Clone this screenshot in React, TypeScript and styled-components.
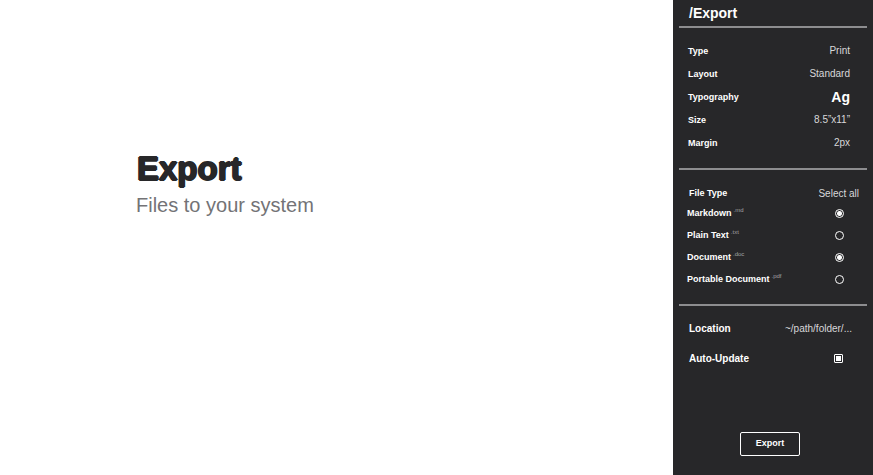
import React from 'react';
import styled, { createGlobalStyle } from 'styled-components';

const GlobalStyle = createGlobalStyle`
  *, *::before, *::after { box-sizing: border-box; }
  body {
    margin: 0;
    background: #fff;
    font-family: "Liberation Sans", Arial, sans-serif;
  }
`;

const Page = styled.div`
  display: grid;
  grid-template-columns: minmax(0, 1fr) 200px;
  min-height: 100vh;
`;

const Hero = styled.main`
  padding: 149px 24px 24px 136px;
`;

/* Shadows on four sides thicken the strokes and round off their corners. */
const Title = styled.h1`
  margin: 0;
  padding-left: 1px;
  font-size: 33px;
  line-height: 40px;
  font-weight: 700;
  color: #272729;
  text-shadow: 1px 0 #272729, -1px 0 #272729, 0 1px #272729, 0 -1px #272729;
`;

const Subtitle = styled.p`
  margin: 4px 0 0;
  font-size: 20px;
  line-height: 24px;
  color: #737376;
`;

const Panel = styled.aside`
  display: flex;
  flex-direction: column;
  padding: 0 6px 19px;
  background: #272729;
  color: #fff;
`;

const PanelTitle = styled.h2`
  margin: 0;
  padding-left: 10px;
  font-size: 14px;
  line-height: 26px;
  font-weight: 700;
`;

const Rule = styled.hr`
  width: 100%;
  height: 2px;
  margin: 0;
  border: 0;
  background: #8d8d8f;
`;

const Settings = styled.dl`
  margin: 0;
  padding: 11px 17px 14px 9px;
`;

const Setting = styled.div`
  display: flex;
  align-items: center;
  justify-content: space-between;
  height: 23px;
`;

const Name = styled.dt`
  font-size: 9px;
  font-weight: 700;
`;

const Value = styled.dd<{ $sample?: boolean }>`
  margin: 0;
  font-size: ${(p) => (p.$sample ? 14 : 10)}px;
  font-weight: ${(p) => (p.$sample ? 700 : 400)};
  color: ${(p) => (p.$sample ? '#fff' : '#d8d8da')};
`;

const FileTypes = styled.section`
  padding: 13px 8px 13px;
`;

const FileHeader = styled.div`
  display: flex;
  align-items: center;
  justify-content: space-between;
  height: 20px;
  padding-left: 2px;
`;

const FileHeading = styled.h3`
  margin: 0;
  font-size: 9px;
  font-weight: 700;
`;

const TextButton = styled.button`
  padding: 0;
  border: 0;
  background: none;
  font: 10px "Liberation Sans", Arial, sans-serif;
  color: #d8d8da;
  cursor: pointer;
`;

const FileOption = styled.label`
  display: flex;
  align-items: center;
  justify-content: space-between;
  height: 22px;
  padding: 0 15px 2px 0;
  font-size: 9px;
  font-weight: 700;
`;

const Extension = styled.sup`
  margin-left: 2px;
  font-size: 6px;
  line-height: 0;
  font-weight: 400;
  vertical-align: 4px;
  color: #a0a0a2;
`;

const Dot = styled.input`
  appearance: none;
  width: 9px;
  height: 9px;
  margin: 0;
  border: 1px solid #fff;
  border-radius: 50%;
  &:checked {
    background: radial-gradient(circle, #fff 2px, transparent 3px);
  }
`;

const Destination = styled.section`
  flex: 1;
  padding: 7px 15px 16px 10px;
`;

const DestinationRow = styled.div`
  display: flex;
  align-items: center;
  justify-content: space-between;
  height: 30px;
`;

const DestinationName = styled.label`
  font-size: 10px;
  font-weight: 700;
`;

const Tick = styled.input`
  appearance: none;
  width: 9px;
  height: 9px;
  margin: 0 9px 0 0;
  padding: 1px;
  border: 1px solid #fff;
  border-radius: 1px;
  &:checked {
    background: #fff content-box;
  }
`;

const ExportButton = styled.button`
  align-self: center;
  width: 60px;
  height: 24px;
  margin-right: 6px;
  padding: 0 0 2px;
  border: 1px solid #fff;
  border-radius: 2px;
  background: none;
  font: 700 9px "Liberation Sans", Arial, sans-serif;
  color: #fff;
  cursor: pointer;
`;

const settings = [
  { name: 'Type', value: 'Print' },
  { name: 'Layout', value: 'Standard' },
  { name: 'Typography', value: 'Ag', sample: true },
  { name: 'Size', value: '8.5”x11”' },
  { name: 'Margin', value: '2px' },
];

const fileTypes = [
  { name: 'Markdown', extension: '.md', on: true },
  { name: 'Plain Text', extension: '.txt', on: false },
  { name: 'Document', extension: '.doc', on: true },
  { name: 'Portable Document', extension: '.pdf', on: false },
];

export default function App() {
  return (
    <>
      <GlobalStyle />
      <Page>
        <Hero>
          <Title>Export</Title>
          <Subtitle>Files to your system</Subtitle>
        </Hero>
        <Panel>
          <PanelTitle>/Export</PanelTitle>
          <Rule />
          <Settings>
            {settings.map((s) => (
              <Setting key={s.name}>
                <Name>{s.name}</Name>
                <Value $sample={s.sample}>{s.value}</Value>
              </Setting>
            ))}
          </Settings>
          <Rule />
          <FileTypes>
            <FileHeader>
              <FileHeading>File Type</FileHeading>
              <TextButton type="button">Select all</TextButton>
            </FileHeader>
            {fileTypes.map((f) => (
              <FileOption key={f.name}>
                <span>
                  {f.name}
                  <Extension>{f.extension}</Extension>
                </span>
                <Dot type="radio" name={f.name} defaultChecked={f.on} />
              </FileOption>
            ))}
          </FileTypes>
          <Rule />
          <Destination>
            <DestinationRow>
              <DestinationName htmlFor="location">Location</DestinationName>
              <TextButton id="location" type="button">~/path/folder/...</TextButton>
            </DestinationRow>
            <DestinationRow>
              <DestinationName htmlFor="auto-update">Auto-Update</DestinationName>
              <Tick id="auto-update" type="checkbox" defaultChecked />
            </DestinationRow>
          </Destination>
          <ExportButton type="button">Export</ExportButton>
        </Panel>
      </Page>
    </>
  );
}
